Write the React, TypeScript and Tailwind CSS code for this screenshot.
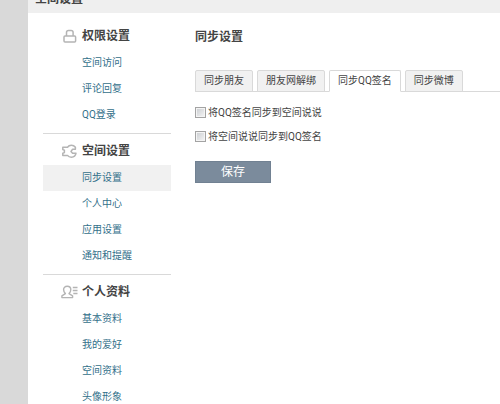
import React, { useState } from "react";
import clsx from "clsx";

const LockIcon = () => (
  <svg
    viewBox="0 0 18 16"
    className="h-4 w-[18px] shrink-0"
    fill="none"
    stroke="#b4b4b4"
    strokeWidth="1.5"
    aria-hidden="true"
  >
    <rect x="3" y="8" width="11.6" height="6" rx="1" />
    <path d="M5.5 8V4.6a2 2 0 0 1 2-2h2.6a2 2 0 0 1 2 2V8" />
  </svg>
);

const WrenchIcon = () => (
  <svg
    viewBox="0 0 18 16"
    className="h-4 w-[18px] shrink-0"
    fill="none"
    stroke="#b4b4b4"
    strokeWidth="1.5"
    strokeLinejoin="round"
    aria-hidden="true"
  >
    <path d="M6.5 4.2H1.8V6.6L3.4 7.2V9.6L1.8 10.2V12.4H6.5C7.4 13.6 8.8 14.2 10.4 14.2C12.8 14.2 14.6 12.7 15 10.2H11.6L10 8.4L11.6 6.2H14.4V4.2C13.4 2.9 12 2.2 10.4 2.2C8.8 2.2 7.4 2.9 6.5 4.2Z" />
  </svg>
);

const ProfileIcon = () => (
  <svg
    viewBox="0 0 18 16"
    className="h-4 w-[18px] shrink-0"
    fill="none"
    stroke="#b4b4b4"
    strokeWidth="1.4"
    strokeLinejoin="round"
    aria-hidden="true"
  >
    <path d="M4.4 9.6C3.2 8.6 2.6 7.2 2.6 5.6C2.6 3.6 4 2.3 6.2 2.3C8.4 2.3 9.8 3.6 9.8 5.6C9.8 7.2 9.2 8.6 8 9.6L11.6 11.8V13.6H0.9V11.8Z" />
    <path d="M11.8 3.5H16.5M11.8 6.5H16.5M12.3 9.5H16.5" />
  </svg>
);

const sections = [
  {
    title: "权限设置",
    icon: <LockIcon />,
    items: ["空间访问", "评论回复", "QQ登录"],
  },
  {
    title: "空间设置",
    icon: <WrenchIcon />,
    items: ["同步设置", "个人中心", "应用设置", "通知和提醒"],
  },
  {
    title: "个人资料",
    icon: <ProfileIcon />,
    items: ["基本资料", "我的爱好", "空间资料", "头像形象"],
  },
];

const tabs = ["同步朋友", "朋友网解绑", "同步QQ签名", "同步微博"];

const options = ["将QQ签名同步到空间说说", "将空间说说同步到QQ签名"];

const Sidebar = () => (
  <nav className="w-32 shrink-0 pt-[6px]">
    {sections.map((section) => (
      <section
        key={section.title}
        className="border-b border-[#d9d9d9] pt-1 pb-[5px] last:border-b-0"
      >
        <h2 className="mb-px flex h-[26px] items-center gap-[3px] pl-[18px] text-[12px] font-bold text-[#444]">
          {section.icon}
          {section.title}
        </h2>
        <ul>
          {section.items.map((item) => (
            <li key={item}>
              <a
                href="#"
                className={clsx(
                  "block pl-[39px] text-[10px] leading-[26px] text-[#33708a] hover:underline",
                  item === "同步设置" && "bg-[#f1f1f1]"
                )}
              >
                {item}
              </a>
            </li>
          ))}
        </ul>
      </section>
    ))}
  </nav>
);

const SyncSettings = () => {
  const [active, setActive] = useState("同步QQ签名");

  return (
    <main className="min-w-0 flex-1 pt-[11px]">
      <h2 className="h-[26px] text-[12px] leading-[26px] font-bold text-[#444]">
        同步设置
      </h2>

      <div
        role="tablist"
        className="mt-5 flex gap-1 border-b border-[#d9d9d9]"
      >
        {tabs.map((tab) => (
          <button
            key={tab}
            type="button"
            role="tab"
            aria-selected={tab === active}
            onClick={() => setActive(tab)}
            className={clsx(
              "-mb-px rounded-t-[2px] border border-[#d9d9d9] px-2 text-[10px] leading-5 whitespace-nowrap text-[#444]",
              tab === active ? "border-b-white bg-white" : "bg-[#f1f1f1]"
            )}
          >
            {tab}
          </button>
        ))}
      </div>

      <form className="pt-2" onSubmit={(e) => e.preventDefault()}>
        {options.map((option) => (
          <label
            key={option}
            className="flex h-6 items-center gap-[2px] text-[10px] text-[#444]"
          >
            <input
              type="checkbox"
              className="size-[11px] appearance-none border border-[#a3a3a3] bg-linear-to-br from-[#c9ccd0] to-[#f6f6f6] shadow-[inset_0_0_0_1px_#f4f4f4] checked:from-[#7b8b9c] checked:to-[#7b8b9c]"
            />
            {option}
          </label>
        ))}
        <button
          type="submit"
          className="mt-[13px] w-[76px] border border-[#718192] bg-[#7b8b9c] text-[12px] leading-5 text-white"
        >
          保存
        </button>
      </form>
    </main>
  );
};

export default function App() {
  return (
    <div className="h-screen overflow-hidden bg-[#d9d9d9] pl-7 font-['Roboto','Noto_Sans_CJK_SC',sans-serif]">
      <div className="min-h-full bg-white">
        <header className="flex h-[13px] items-end overflow-hidden bg-[#efefef] pb-[6px] pl-[7px]">
          <h1 className="text-[12px] leading-4 font-bold text-[#444]">
            空间设置
          </h1>
        </header>
        <div className="flex gap-6 pl-[15px]">
          <Sidebar />
          <SyncSettings />
        </div>
      </div>
    </div>
  );
}
